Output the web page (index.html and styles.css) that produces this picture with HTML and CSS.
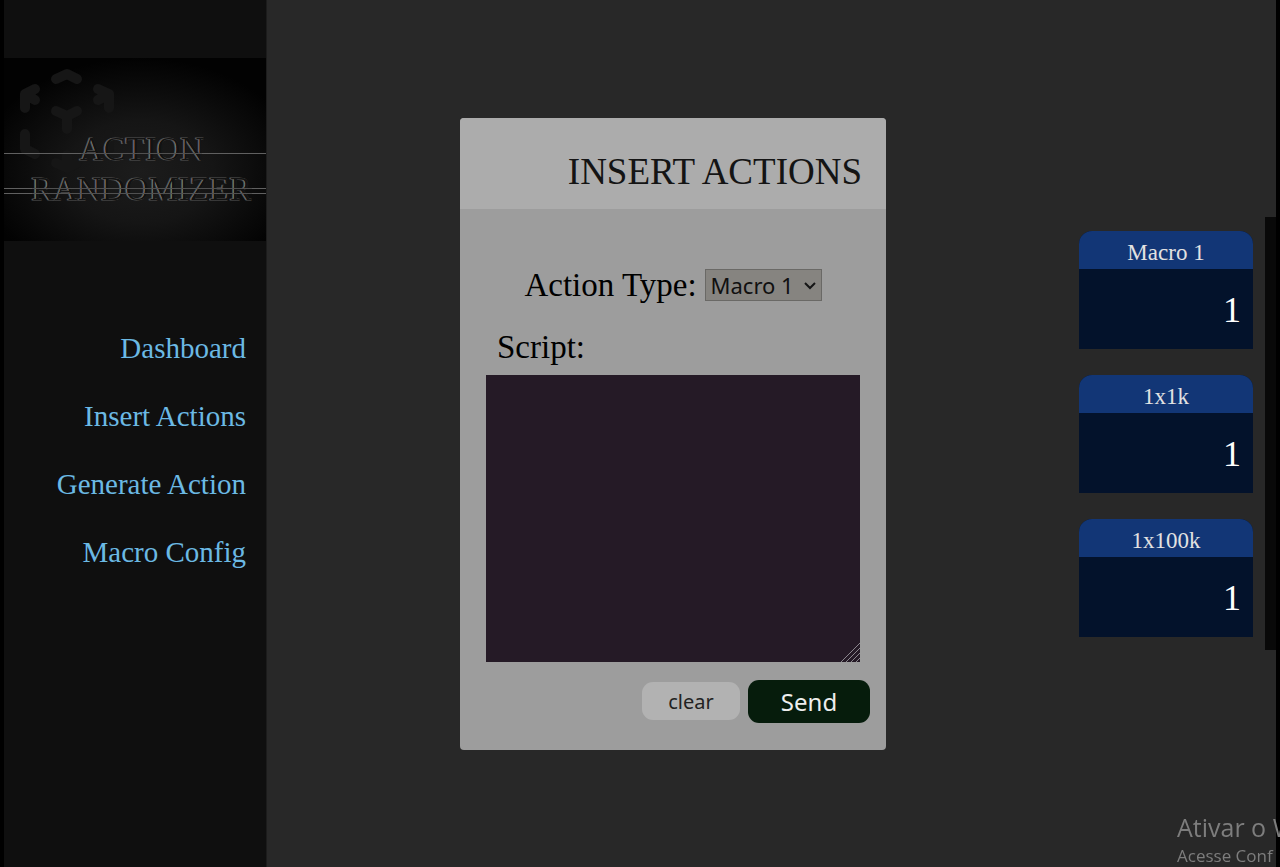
FILE: index.html
```html
<!DOCTYPE html>
<html lang="en">
<head>
<meta charset="utf-8">
<title>Action Randomizer</title>
<meta name="viewport" content="width=device-width, initial-scale=1">
<link rel="stylesheet" href="styles.css">
</head>
<body>
<div class="app">
  <aside class="sidebar">
    <svg class="logo" viewBox="0 0 262 183" role="img" aria-label="Action Randomizer">
      <defs>
        <radialGradient id="glow" cx="0.52" cy="0.62" r="0.62">
          <stop offset="0" stop-color="#1c1c1c"/>
          <stop offset="0.45" stop-color="#151515"/>
          <stop offset="1" stop-color="#020202"/>
        </radialGradient>
      </defs>
      <rect width="262" height="183" fill="url(#glow)"/>
      <g class="logo-hex">
        <path d="M52 21 L63 16 L73 21"/>
        <path d="M21 50 V36 L31 31 M21 36 L31 42"/>
        <path d="M105 50 V36 L94 31 M105 36 L94 42"/>
        <path d="M52 53 L63 58 L73 53 M63 58 V71"/>
        <path d="M21 76 V91 L31 96"/>
        <path d="M105 76 V91 L94 96"/>
        <path d="M52 105 L63 110 L73 105 M63 110 V97"/>
      </g>
      <path class="logo-rule" d="M0 95.500 H77 M198 95.500 H262 M0 130.500 H28 M248 130.500 H262 M0 135.500 H28 M248 135.500 H262"/>
      <g class="logo-text">
        <text class="lit" x="75" y="102">ACTION</text>
        <text class="face" x="76" y="102">ACTION</text>
        <text class="lit" x="27" y="142">RANDOMIZER</text>
        <text class="face" x="28" y="142">RANDOMIZER</text>
      </g>
      <path class="logo-rule faint" d="M77 95.500 H198 M28 130.500 H248 M28 135.500 H248"/>
    </svg>
    <nav class="menu">
      <a href="#dashboard">Dashboard</a>
      <a href="#insert">Insert Actions</a>
      <a href="#generate">Generate Action</a>
      <a href="#macro">Macro Config</a>
    </nav>
  </aside>

  <main class="content">
    <form class="panel">
      <h1 class="panel-title">INSERT ACTIONS</h1>
      <div class="panel-body">
        <div class="type-row">
          <label for="type">Action Type:</label>
          <span class="select-wrap">
            <select id="type"><option>Macro 1</option><option>1x1k</option><option>1x100k</option></select>
            <svg class="chevron" viewBox="0 0 12 8"><path d="M1 1 L6 6 L11 1"/></svg>
          </span>
        </div>
        <label class="script-label" for="script">Script:</label>
        <div class="script-wrap">
          <textarea id="script"></textarea>
          <svg class="grip" viewBox="0 0 20 20"><path d="M1 20 L20 1 M6 20 L20 6 M11 20 L20 11 M16 20 L20 16"/></svg>
        </div>
      </div>
      <div class="buttons">
        <button class="clear" type="reset">clear</button>
        <button class="send" type="submit">Send</button>
      </div>
    </form>
  </main>

  <section class="counters">
    <article class="counter"><h2>Macro 1</h2><p>1</p></article>
    <article class="counter"><h2>1x1k</h2><p>1</p></article>
    <article class="counter"><h2>1x100k</h2><p>1</p></article>
  </section>
</div>
<div class="activation">
  <p class="activation-title">Ativar o W</p>
  <p class="activation-note">Acesse Conf</p>
</div>
</body>
</html>
```

FILE: styles.css
```css
* {
  box-sizing: border-box;
}

body {
  margin: 0;
  padding: 0 4px;
  background: #000;
  font-family: "Liberation Serif", "Times New Roman", serif;
  overflow: hidden;
}

h1, h2, p {
  margin: 0;
  font-weight: normal;
}

.app {
  display: flex;
  align-items: center;
  min-height: 100vh;
  background: #282828;
}

.sidebar {
  align-self: stretch;
  width: 263px;
  flex: none;
  padding-top: 58px;
  background: #0f0f0f;
  border-right: 1px solid #1c1c1c;
}

.logo {
  display: block;
  width: 100%;
}

.logo-hex path {
  fill: none;
  stroke: #161616;
  stroke-width: 10;
  stroke-linecap: round;
  stroke-linejoin: round;
}

.logo-rule {
  fill: none;
  stroke: #606060;
  stroke-width: 1;
}

.logo-rule.faint {
  stroke: #505050;
}

.logo-text {
  font-size: 33px;
}

.lit {
  fill: #b0b0b0;
  stroke: #555;
  stroke-width: 1;
}

.face {
  fill: #121212;
}

.menu {
  display: flex;
  flex-direction: column;
  align-items: flex-end;
  gap: 34px;
  padding: 90px 20px 0 0;
}

.menu a {
  color: #6bb9e4;
  font-size: 29px;
  line-height: 34px;
  text-decoration: none;
}

.content {
  flex: 1;
  display: flex;
  justify-content: center;
}

.panel {
  width: 426px;
  border-radius: 4px;
  background: #9d9d9d;
  overflow: hidden;
}

.panel-title {
  padding: 33px 24px 16px;
  background: #acacac;
  color: #141414;
  font-size: 37px;
  line-height: 42px;
  text-align: right;
}

.panel-body {
  padding: 56px 26px 0;
  font-size: 33px;
  line-height: 40px;
  color: #000;
}

.type-row {
  display: flex;
  align-items: center;
  justify-content: center;
  gap: 8px;
}

.select-wrap {
  position: relative;
  display: flex;
}

select {
  appearance: none;
  width: 117px;
  height: 32px;
  padding: 0 5px;
  border: 1px solid #6a6966;
  border-radius: 0;
  background: #868480;
  color: #101010;
  font-family: "Noto Sans", sans-serif;
  font-size: 22px;
  line-height: 30px;
}

.chevron {
  position: absolute;
  right: 6px;
  top: 13px;
  width: 12px;
  height: 8px;
  pointer-events: none;
}

.chevron path {
  fill: none;
  stroke: #151515;
  stroke-width: 2;
}

.script-label {
  display: block;
  padding: 22px 11px 8px;
}

.script-wrap {
  position: relative;
}

textarea {
  display: block;
  width: 100%;
  height: 287px;
  padding: 8px;
  border: 0;
  background: #251a26;
  color: #fff;
  font-size: 22px;
  resize: none;
}

.grip {
  position: absolute;
  right: 0;
  bottom: 0;
  width: 20px;
  height: 20px;
}

.grip path {
  fill: none;
  stroke: #8b868d;
  stroke-width: 1;
}

.buttons {
  display: flex;
  justify-content: flex-end;
  align-items: center;
  gap: 8px;
  padding: 18px 16px 27px;
}

button {
  border: 0;
  border-radius: 11px;
  font-family: "Noto Sans", sans-serif;
}

.clear {
  width: 98px;
  height: 38px;
  background: #b2b2b2;
  color: #222;
  font-size: 20px;
}

.send {
  width: 122px;
  height: 43px;
  background: #061c0c;
  color: #eee;
  font-size: 24px;
}

.counters {
  display: flex;
  flex-direction: column;
  gap: 26px;
  padding: 14px 12px 13px 0;
  border-right: 11px solid #090909;
}

.counter {
  width: 174px;
  border-radius: 13px 13px 0 0;
  background: #03122b;
  overflow: hidden;
}

.counter h2 {
  padding: 9px 0 3px;
  background: #123676;
  color: #e2e2e2;
  font-size: 23px;
  line-height: 26px;
  text-align: center;
}

.counter p {
  padding: 21px 12px 19px;
  color: #fff;
  font-size: 36px;
  line-height: 40px;
  text-align: right;
}

.activation {
  position: fixed;
  right: 0;
  bottom: 0;
  width: 103px;
  overflow: hidden;
  white-space: nowrap;
  color: #7d7d7d;
  font-family: "Open Sans", "Noto Sans", sans-serif;
}

.activation-title {
  font-size: 25px;
  line-height: 36px;
}

.activation-note {
  font-size: 17px;
  line-height: 22px;
}
```
